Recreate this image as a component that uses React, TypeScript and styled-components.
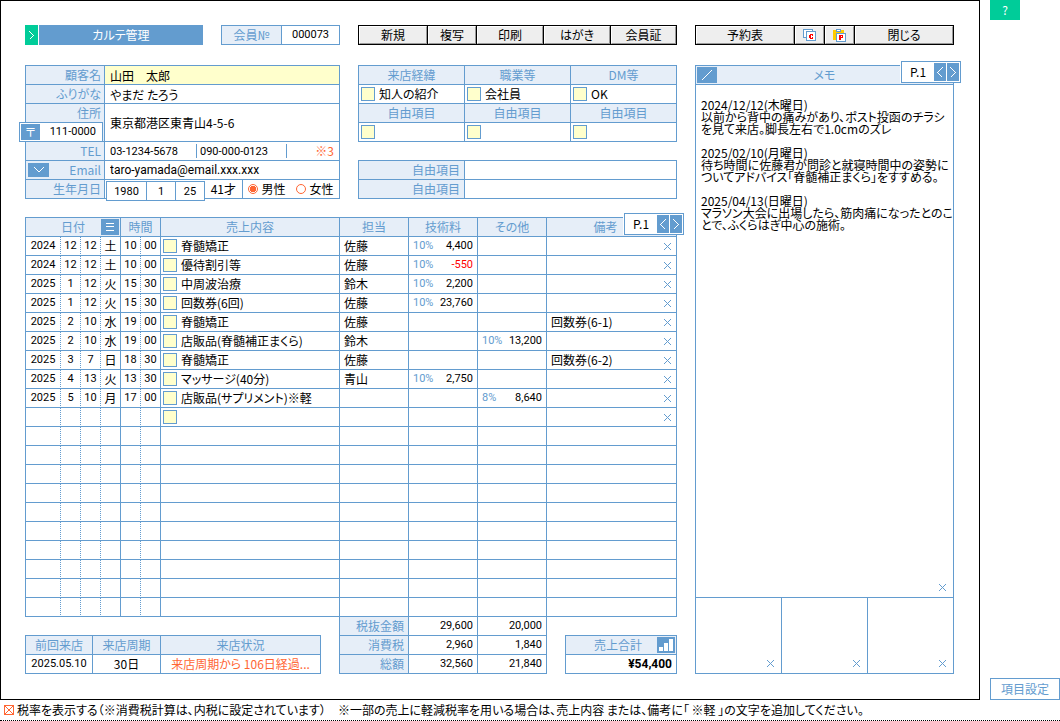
import React from 'react';
import styled, { createGlobalStyle, css } from 'styled-components';

const BLUE = '#639ccf';
const PALE = '#e6eef8';
const YELLOW = '#ffffcc';
const ORANGE = '#ff6633';
const GREEN = '#00cc99';
const JP = '"Noto Sans CJK JP", sans-serif';
const NUM = 'Roboto, "Noto Sans CJK JP", sans-serif';

const GlobalStyle = createGlobalStyle`
  *, *::before, *::after { box-sizing: border-box; }
  body {
    margin: 0;
    background: #fff;
    color: #000;
    font-family: ${JP};
    font-size: 12px;
    line-height: 16px;
    font-feature-settings: 'palt';
  }
  button, input, textarea {
    font: inherit;
    color: inherit;
    margin: 0;
    padding: 0;
    border: 0;
    border-radius: 0;
    background: none;
    font-feature-settings: inherit;
  }
  button { cursor: pointer; }
`;

/* ---------- page frame ---------- */

const Page = styled.div`
  min-width: 900px;
`;

const Top = styled.div`
  display: grid;
  grid-template-columns: minmax(0, 1fr) 70px;
  column-gap: 10px;
`;

const Frame = styled.main`
  border: 1px solid #000;
  padding: 24px 25px 25px 24px;
  display: grid;
  grid-template-columns: minmax(0, 652fr) minmax(0, 259fr);
  gap: 18px;
`;

const Side = styled.aside`
  display: flex;
  flex-direction: column;
  justify-content: space-between;
  align-items: flex-start;
`;

const HelpButton = styled.button`
  width: 30px;
  height: 20px;
  background: ${GREEN};
  color: #fff;
`;

const SettingsButton = styled.button`
  width: 100%;
  height: 22px;
  border: 1px solid ${BLUE};
  background: #fff;
  color: ${BLUE};
`;

const Footer = styled.footer`
  display: flex;
  align-items: center;
  gap: 12px;
  height: 21px;
  padding-left: 4px;
  border-bottom: 1px dotted #000;
  white-space: nowrap;
`;

const FooterLabel = styled.label`
  display: flex;
  align-items: center;
  gap: 3px;
`;

const Pane = styled.div`
  display: flex;
  flex-direction: column;
  min-width: 0;
`;

const Columns = styled.div<{ $space: number }>`
  display: grid;
  grid-template-columns: minmax(0, 315fr) minmax(0, 319fr);
  column-gap: 18px;
  margin-bottom: ${(p) => p.$space}px;
`;

/* ---------- header ---------- */

const TitleRow = styled.div`
  display: flex;
  height: 20px;
`;

const ExpandButton = styled.button`
  width: 13px;
  margin-right: 1px;
  background: ${GREEN};
  color: #fff;
  display: grid;
  place-items: center;
`;

const Title = styled.h1`
  flex: 1;
  margin: 0 18px 0 0;
  background: ${BLUE};
  color: #fff;
  font-size: 12px;
  font-weight: 400;
  line-height: 20px;
  text-align: center;
`;

const MemberNo = styled.div`
  width: 119px;
  display: grid;
  grid-template-columns: 60px 1fr;
  border: 1px solid ${BLUE};
  line-height: 18px;
  text-align: center;
`;

const MemberLabel = styled.label`
  background: ${PALE};
  color: ${BLUE};
  border-right: 1px solid ${BLUE};
`;

const Field = styled.input<{ $align?: string; $num?: boolean }>`
  width: 100%;
  min-width: 0;
  height: 18px;
  text-align: ${(p) => p.$align ?? 'left'};
  font-family: ${(p) => (p.$num ? NUM : JP)};
  font-size: ${(p) => (p.$num ? 11 : 12)}px;
  outline: none;
`;

const EmailField = styled(Field)`
  font-family: ${NUM};
`;

const Toolbar = styled.div<{ $cols: string }>`
  display: grid;
  grid-template-columns: ${(p) => p.$cols};
  gap: 1px;
  height: 20px;
  padding: 1px;
  background: #000;
`;

const ToolButton = styled.button`
  display: grid;
  place-items: center;
  background: #eee;
  border: 1px solid;
  border-color: #fff #999 #999 #fff;
  line-height: 16px;
`;

/* ---------- customer card ---------- */

const Card = styled.form`
  border: 1px solid ${BLUE};
  border-bottom: 0;
  height: 134px;
`;

const Row = styled.div<{ $tall?: boolean }>`
  display: grid;
  grid-template-columns: 79px minmax(0, 1fr);
  height: ${(p) => (p.$tall ? 38 : 19)}px;
  border-bottom: 1px solid ${BLUE};
`;

const RowLabel = styled.div`
  position: relative;
  display: flex;
  align-items: flex-start;
  padding: 0 3px 0 1px;
  background: ${PALE};
  color: ${BLUE};
  border-right: 1px solid ${BLUE};
  line-height: 18px;

  label { margin-left: auto; }
`;

const Value = styled.div<{ $filled?: boolean }>`
  position: relative;
  display: flex;
  align-items: center;
  padding-left: 5px;
  background: ${(p) => (p.$filled ? YELLOW : '#fff')};
`;

const Postal = styled.div`
  position: absolute;
  z-index: 1;
  left: -7px;
  top: 18px;
  width: 84px;
  height: 20px;
  display: flex;
  align-items: center;
  padding: 0 6px 0 1px;
  border: 1px solid ${BLUE};
  background: #fff;
  color: #000;
`;

const BlueButton = styled.button<{ $w: number; $h: number }>`
  flex: none;
  width: ${(p) => p.$w}px;
  height: ${(p) => p.$h}px;
  display: grid;
  place-items: center;
  background: ${BLUE};
  color: #fff;
  line-height: 16px;
`;

const PhonePart = styled.div`
  width: 87px;
  flex: none;
  height: 14px;
  display: flex;
  align-items: center;
  border-right: 1px solid ${BLUE};
  margin-right: 3px;
`;

const Note = styled.span`
  margin-left: auto;
  padding-right: 5px;
  color: ${ORANGE};
`;

const BirthDate = styled.div`
  position: absolute;
  z-index: 1;
  left: 1px;
  top: 1px;
  width: 99px;
  height: 20px;
  display: grid;
  grid-template-columns: 39px 28px 28px;
  gap: 1px;
  border: 1px solid ${BLUE};
  background: ${BLUE};

  input { background: #fff; }
`;

const Age = styled.span`
  width: 133px;
  flex: none;
  height: 18px;
  padding-right: 6px;
  border-right: 1px solid ${BLUE};
  text-align: right;
  line-height: 18px;
`;

const Gender = styled.div`
  flex: 1;
  display: flex;
  justify-content: space-around;
`;

const RadioLabel = styled.label`
  display: flex;
  align-items: center;
  gap: 3px;
`;

const Radio = styled.input`
  appearance: none;
  width: 10px;
  height: 10px;
  border: 1px solid ${ORANGE};
  border-radius: 50%;

  &:checked { background: radial-gradient(${ORANGE} 0 3px, #fff 3px); }
`;

/* ---------- tables ---------- */

const Table = styled.table`
  width: 100%;
  table-layout: fixed;
  border-collapse: separate;
  border-spacing: 0;
  border-top: 1px solid ${BLUE};
  border-left: 1px solid ${BLUE};
`;

const cell = css`
  height: 19px;
  padding: 0;
  border-right: 1px solid ${BLUE};
  border-bottom: 1px solid ${BLUE};
  line-height: 18px;
  white-space: nowrap;
`;

const Th = styled.th<{ $align?: string }>`
  ${cell}
  background: ${PALE};
  color: ${BLUE};
  font-weight: 400;
  text-align: ${(p) => p.$align ?? 'center'};
  padding: ${(p) => (p.$align === 'right' ? '0 4px' : '0')};
`;

const Td = styled.td<{
  $align?: string;
  $dotted?: boolean;
  $num?: boolean;
  $color?: string;
  $bold?: boolean;
  $pick?: boolean;
}>`
  ${cell}
  text-align: ${(p) => p.$align ?? 'left'};
  border-right-style: ${(p) => (p.$dotted ? 'dotted' : 'solid')};
  padding: ${(p) => (p.$align === 'center' ? '0' : p.$pick ? '0 2px' : '0 4px')};
  font-family: ${(p) => (p.$num ? NUM : JP)};
  font-size: ${(p) => (p.$num && !p.$bold ? 11 : 12)}px;
  font-weight: ${(p) => (p.$bold ? 700 : 400)};
  color: ${(p) => p.$color ?? '#000'};
`;

const HeadWithButton = styled.div<{ $cols: string }>`
  display: grid;
  grid-template-columns: ${(p) => p.$cols};
  align-items: center;
  height: 18px;
  padding: 0 1px;
  text-align: center;
`;

const Amount = styled.div<{ $negative?: boolean }>`
  display: flex;
  justify-content: space-between;
  color: ${(p) => (p.$negative ? '#f00' : '#000')};
`;

const Rate = styled.span`
  color: ${BLUE};
`;

const RemarkCell = styled.div`
  display: flex;
  justify-content: space-between;
  align-items: center;
`;

const Picker = styled.input`
  appearance: none;
  flex: none;
  width: 14px;
  height: 14px;
  border: 1px solid ${BLUE};
  background: ${YELLOW};
`;

const PickLabel = styled.label`
  display: flex;
  align-items: center;
  gap: 4px;
  height: 18px;
`;

const TickBox = styled.input`
  appearance: none;
  width: 10px;
  height: 10px;
  border: 1px solid ${ORANGE};

  &:checked {
    background:
      linear-gradient(45deg, transparent 44%, ${ORANGE} 44% 56%, transparent 56%),
      linear-gradient(-45deg, transparent 44%, ${ORANGE} 44% 56%, transparent 56%);
  }
`;

const ClearButton = styled.button`
  width: 9px;
  height: 9px;
  display: grid;
  place-items: center;
  color: ${BLUE};
`;

const FreeSpace = styled.div`
  margin-top: 18px;
`;

const Relative = styled.div`
  position: relative;
`;

const PagerBox = styled.div`
  position: absolute;
  z-index: 1;
  top: -4px;
  right: -7px;
  width: 60px;
  height: 22px;
  display: flex;
  gap: 1px;
  padding: 1px;
  border: 1px solid ${BLUE};
  background: #fff;
  box-shadow: -1px 0 0 #fff;
`;

const PageNo = styled.span`
  flex: 1;
  text-align: center;
  line-height: 18px;
`;

const Summary = styled.div`
  display: flex;
  align-items: flex-end;
  gap: 18px;
`;

const Visit = styled.div`
  flex: 1;
  min-width: 0;
`;

const Totals = styled.div`
  width: 208px;

  table { border-top: 0; }
`;

const Grand = styled.div`
  width: 112px;
`;

/* ---------- memo ---------- */

const MemoPanel = styled.section`
  position: relative;
  flex: 1;
  display: flex;
  flex-direction: column;
  margin-top: 20px;
`;

const MemoBody = styled.div`
  flex: 1;
  display: flex;
  flex-direction: column;
  border: 1px solid ${BLUE};
`;

const MemoHead = styled.div`
  background: ${PALE};
  color: ${BLUE};
  border-bottom: 1px solid ${BLUE};
`;

const MemoText = styled.textarea`
  flex: 1;
  width: 100%;
  padding: 14px 0 0 5px;
  line-height: 12px;
  resize: none;
  outline: none;
  overflow: hidden;
  white-space: pre;
`;

const MemoClear = styled.div`
  display: flex;
  justify-content: flex-end;
  padding: 0 6px 5px;
`;

const Photos = styled.div`
  display: grid;
  grid-template-columns: repeat(3, minmax(0, 1fr));
  gap: 1px;
  height: 76px;
  border-top: 1px solid ${BLUE};
  background: ${BLUE};
`;

const Photo = styled.div`
  display: flex;
  align-items: flex-end;
  justify-content: flex-end;
  padding: 0 6px 5px;
  background: #fff;
`;

/* ---------- drawings ---------- */

const Line = ({ d, w, h }: { d: string; w: number; h: number }) => (
  <svg width={w} height={h} viewBox={`0 0 ${w} ${h}`} fill="none" stroke="currentColor" shapeRendering="crispEdges" aria-hidden="true">
    <path d={d} />
  </svg>
);

const Clear = ({ label }: { label: string }) => (
  <ClearButton type="button" aria-label={label}>
    <Line w={7} h={7} d="M0 0L7 7M7 0L0 7" />
  </ClearButton>
);

const CopyIcon = () => (
  <svg width="13" height="12" viewBox="0 0 13 12" fill="none" shapeRendering="crispEdges" aria-hidden="true">
    <path d="M.5 .5H9.5V8.5H.5Z" fill="#fff" stroke={BLUE} />
    <path d="M3.500 2.500H12.500V11.500H3.500Z" fill="#fff" stroke={BLUE} />
    <path d="M7 5h3v1H7zM6 6h2v3H6zM7 9h3v1H7zM9 6h1v1H9zM9 8h1v1H9z" fill="#f00" />
  </svg>
);

const PasteIcon = () => (
  <svg width="13" height="13" viewBox="0 0 13 13" fill="none" shapeRendering="crispEdges" aria-hidden="true">
    <path d="M0 1H11V11H0Z" fill="#fc0" />
    <path d="M3.500 .5H7.500V2.500H3.500Z" fill="#fff" stroke={BLUE} />
    <path d="M3.500 4.500H12.500V12.500H3.500Z" fill="#fff" stroke={BLUE} />
    <path d="M6 6h2v5H6zM8 6h2v1H8zM9 7h1v1H9zM8 8h2v1H8z" fill="#f00" />
  </svg>
);

const ChartIcon = () => (
  <svg width="16" height="14" viewBox="0 0 16 14" fill="#fff" shapeRendering="crispEdges" aria-hidden="true">
    <path d="M1 9h4v4H1zM6 5h4v8H6zM11 1h4v12h-4z" />
  </svg>
);

const Pager = () => (
  <PagerBox>
    <PageNo>P.1</PageNo>
    <BlueButton type="button" $w={12} $h={18} aria-label="前のページ">
      <Line w={6} h={11} d="M5.500 .5L.5 5.500L5.500 10.500" />
    </BlueButton>
    <BlueButton type="button" $w={12} $h={18} aria-label="次のページ">
      <Line w={6} h={11} d="M.5 .5L5.500 5.500L.5 10.500" />
    </BlueButton>
  </PagerBox>
);

/* ---------- data ---------- */

type Sale = {
  date: [string, string, string, string];
  time: [string, string];
  item: string;
  staff: string;
  tech?: [string, string];
  other?: [string, string];
  remark?: string;
};

const sales: Sale[] = [
  { date: ['2024', '12', '12', '土'], time: ['10', '00'], item: '脊髄矯正', staff: '佐藤', tech: ['10%', '4,400'] },
  { date: ['2024', '12', '12', '土'], time: ['10', '00'], item: '優待割引等', staff: '佐藤', tech: ['10%', '-550'] },
  { date: ['2025', '1', '12', '火'], time: ['15', '30'], item: '中周波治療', staff: '鈴木', tech: ['10%', '2,200'] },
  { date: ['2025', '1', '12', '火'], time: ['15', '30'], item: '回数券(6回)', staff: '佐藤', tech: ['10%', '23,760'] },
  { date: ['2025', '2', '10', '水'], time: ['19', '00'], item: '脊髄矯正', staff: '佐藤', remark: '回数券(6-1)' },
  { date: ['2025', '2', '10', '水'], time: ['19', '00'], item: '店販品(脊髄補正まくら)', staff: '鈴木', other: ['10%', '13,200'] },
  { date: ['2025', '3', '7', '日'], time: ['18', '30'], item: '脊髄矯正', staff: '佐藤', remark: '回数券(6-2)' },
  { date: ['2025', '4', '13', '火'], time: ['13', '30'], item: 'マッサージ(40分)', staff: '青山', tech: ['10%', '2,750'] },
  { date: ['2025', '5', '10', '月'], time: ['17', '00'], item: '店販品(サプリメント)※軽', staff: '', other: ['8%', '8,640'] },
  { date: ['', '', '', ''], time: ['', ''], item: '', staff: '' },
];

const blankRows = Array.from({ length: 10 }, (_, i) => i);

const memo = `2024/12/12(木曜日)
以前から背中の痛みがあり、ポスト投函のチラシ
を見て来店。脚長左右で1.0cmのズレ

2025/02/10(月曜日)
待ち時間に佐藤君が問診と就寝時間中の姿勢に
ついてアドバイス「脊髄補正まくら」をすすめる。

2025/04/13(日曜日)
マラソン大会に出場したら、筋肉痛になったとのこ
とで、ふくらはぎ中心の施術。`;

const Money = ({ value }: { value?: [string, string] }) => (
  <Td $num>
    {value && (
      <Amount $negative={value[1].startsWith('-')}>
        <Rate>{value[0]}</Rate>
        <span>{value[1]}</span>
      </Amount>
    )}
  </Td>
);

const Pick = ({ text, label }: { text: string; label: string }) => (
  <Td $pick>
    <PickLabel>
      <Picker type="checkbox" aria-label={label} />
      {text}
    </PickLabel>
  </Td>
);

const SalesTable = () => (
  <Relative>
    <Table>
      <colgroup>
        {[35, 20, 20, 20, 20, 20].map((w, i) => (
          <col key={i} width={w} />
        ))}
        <col />
        {[69, 69, 69, 130].map((w, i) => (
          <col key={i} width={w} />
        ))}
      </colgroup>
      <thead>
        <tr>
          <Th colSpan={4}>
            <HeadWithButton $cols="18px 1fr 18px">
              <i />
              <span>日付</span>
              <BlueButton type="button" $w={18} $h={16} aria-label="並べ替え">
                <Line w={8} h={8} d="M0 .5H8M0 3.500H8M0 7.500H8" />
              </BlueButton>
            </HeadWithButton>
          </Th>
          <Th colSpan={2}>時間</Th>
          <Th>売上内容</Th>
          <Th>担当</Th>
          <Th>技術料</Th>
          <Th>その他</Th>
          <Th>
            <HeadWithButton $cols="1fr 12px"><span>備考</span></HeadWithButton>
          </Th>
        </tr>
      </thead>
      <tbody>
        {sales.map((s, i) => (
          <tr key={i}>
            <Td $align="center" $dotted $num>{s.date[0]}</Td>
            <Td $align="center" $dotted $num>{s.date[1]}</Td>
            <Td $align="center" $dotted $num>{s.date[2]}</Td>
            <Td $align="center">{s.date[3]}</Td>
            <Td $align="center" $dotted $num>{s.time[0]}</Td>
            <Td $align="center" $num>{s.time[1]}</Td>
            <Pick text={s.item} label="売上内容を選択" />
            <Td>{s.staff}</Td>
            <Money value={s.tech} />
            <Money value={s.other} />
            <Td>
              <RemarkCell>
                <span>{s.remark}</span>
                <Clear label="行を削除" />
              </RemarkCell>
            </Td>
          </tr>
        ))}
        {blankRows.map((i) => (
          <tr key={i}>
            {[true, true, true, false, true, false, false, false, false, false, false].map((dotted, c) => (
              <Td key={c} $dotted={dotted} />
            ))}
          </tr>
        ))}
      </tbody>
    </Table>
    <Pager />
  </Relative>
);

const CustomerCard = () => (
  <Card>
    <Row>
      <RowLabel><label htmlFor="name">顧客名</label></RowLabel>
      <Value $filled><Field id="name" defaultValue="山田　太郎" /></Value>
    </Row>
    <Row>
      <RowLabel><label htmlFor="kana">ふりがな</label></RowLabel>
      <Value><Field id="kana" defaultValue="やまだ たろう" /></Value>
    </Row>
    <Row $tall>
      <RowLabel>
        <label htmlFor="address">住所</label>
        <Postal>
          <BlueButton type="button" $w={19} $h={16}>〒</BlueButton>
          <Field $num $align="right" aria-label="郵便番号" defaultValue="111-0000" />
        </Postal>
      </RowLabel>
      <Value><Field id="address" defaultValue="東京都港区東青山4-5-6" /></Value>
    </Row>
    <Row>
      <RowLabel><label htmlFor="tel">TEL</label></RowLabel>
      <Value>
        <PhonePart><Field $num id="tel" defaultValue="03-1234-5678" /></PhonePart>
        <PhonePart><Field $num aria-label="携帯電話" defaultValue="090-000-0123" /></PhonePart>
        <Note>※3</Note>
      </Value>
    </Row>
    <Row>
      <RowLabel>
        <HeadWithButton $cols="21px">
          <BlueButton type="button" $w={21} $h={14} aria-label="メールの一覧">
            <Line w={10} h={6} d="M.5 .5L5 5L9.500 .5" />
          </BlueButton>
        </HeadWithButton>
        <label htmlFor="email">Email</label>
      </RowLabel>
      <Value><EmailField id="email" defaultValue="taro-yamada@email.xxx.xxx" /></Value>
    </Row>
    <Row>
      <RowLabel><label htmlFor="year">生年月日</label></RowLabel>
      <Value>
        <BirthDate>
          <Field $num $align="center" id="year" defaultValue="1980" />
          <Field $num $align="center" aria-label="月" defaultValue="1" />
          <Field $num $align="center" aria-label="日" defaultValue="25" />
        </BirthDate>
        <Age>41才</Age>
        <Gender>
          <RadioLabel><Radio type="radio" name="gender" defaultChecked />男性</RadioLabel>
          <RadioLabel><Radio type="radio" name="gender" />女性</RadioLabel>
        </Gender>
      </Value>
    </Row>
  </Card>
);

const Attributes = () => (
  <div>
    <Table>
      <tbody>
        <tr><Th>来店経緯</Th><Th>職業等</Th><Th>DM等</Th></tr>
        <tr>
          <Pick text="知人の紹介" label="来店経緯" />
          <Pick text="会社員" label="職業等" />
          <Pick text="OK" label="DM等" />
        </tr>
        <tr><Th>自由項目</Th><Th>自由項目</Th><Th>自由項目</Th></tr>
        <tr>
          <Pick text="" label="自由項目1" />
          <Pick text="" label="自由項目2" />
          <Pick text="" label="自由項目3" />
        </tr>
      </tbody>
    </Table>
    <FreeSpace>
      <Table>
        <colgroup><col width={106} /><col /></colgroup>
        <tbody>
          <tr><Th $align="right" scope="row">自由項目</Th><Td /></tr>
          <tr><Th $align="right" scope="row">自由項目</Th><Td /></tr>
        </tbody>
      </Table>
    </FreeSpace>
  </div>
);

const SummaryRow = () => (
  <Summary>
    <Visit>
      <Table>
        <colgroup><col width={67} /><col width={68} /><col /></colgroup>
        <thead><tr><Th>前回来店</Th><Th>来店周期</Th><Th>来店状況</Th></tr></thead>
        <tbody>
          <tr>
            <Td $align="center" $num>2025.05.10</Td>
            <Td $align="center">30日</Td>
            <Td $align="center" $color={ORANGE}>来店周期から 106日経過...</Td>
          </tr>
        </tbody>
      </Table>
    </Visit>
    <Totals>
      <Table>
        <tbody>
          {[['税抜金額', '29,600', '20,000'], ['消費税', '2,960', '1,840'], ['総額', '32,560', '21,840']].map((r) => (
            <tr key={r[0]}>
              <Th $align="right" scope="row">{r[0]}</Th>
              <Td $align="right" $num>{r[1]}</Td>
              <Td $align="right" $num>{r[2]}</Td>
            </tr>
          ))}
        </tbody>
      </Table>
    </Totals>
    <Grand>
      <Table>
        <thead>
          <tr>
            <Th>
              <HeadWithButton $cols="12px 1fr 18px">
                <i />
                <span>売上合計</span>
                <BlueButton type="button" $w={18} $h={16} aria-label="売上グラフ"><ChartIcon /></BlueButton>
              </HeadWithButton>
            </Th>
          </tr>
        </thead>
        <tbody><tr><Td $align="right" $num $bold>¥54,400</Td></tr></tbody>
      </Table>
    </Grand>
  </Summary>
);

export default function App() {
  return (
    <Page>
      <GlobalStyle />
      <Top>
        <Frame>
          <Pane>
            <Columns $space={20}>
              <TitleRow>
                <ExpandButton type="button" aria-label="開く">
                  <Line w={5} h={9} d="M.5 .5L4.500 4.500L.5 8.500" />
                </ExpandButton>
                <Title>カルテ管理</Title>
                <MemberNo>
                  <MemberLabel htmlFor="member">会員№</MemberLabel>
                  <Field $num $align="center" id="member" defaultValue="000073" />
                </MemberNo>
              </TitleRow>
              <Toolbar $cols="68fr 48fr 66fr 66fr 65fr">
                {['新規', '複写', '印刷', 'はがき', '会員証'].map((t) => (
                  <ToolButton key={t} type="button">{t}</ToolButton>
                ))}
              </Toolbar>
            </Columns>
            <Columns $space={18}>
              <CustomerCard />
              <Attributes />
            </Columns>
            <SalesTable />
            <SummaryRow />
          </Pane>
          <Pane>
            <Toolbar $cols="1fr 29px 29px 1fr">
              <ToolButton type="button">予約表</ToolButton>
              <ToolButton type="button" aria-label="コピー"><CopyIcon /></ToolButton>
              <ToolButton type="button" aria-label="貼り付け"><PasteIcon /></ToolButton>
              <ToolButton type="button">閉じる</ToolButton>
            </Toolbar>
            <MemoPanel>
              <MemoBody>
                <MemoHead>
                  <HeadWithButton $cols="20px 1fr 20px">
                    <BlueButton type="button" $w={20} $h={16} aria-label="メモを編集">
                      <Line w={10} h={10} d="M0 10L10 0" />
                    </BlueButton>
                    <label htmlFor="memo">メモ</label>
                  </HeadWithButton>
                </MemoHead>
                <MemoText id="memo" defaultValue={memo} />
                <MemoClear><Clear label="メモを消去" /></MemoClear>
                <Photos>
                  {[1, 2, 3].map((n) => (
                    <Photo key={n}><Clear label={`画像${n}を消去`} /></Photo>
                  ))}
                </Photos>
              </MemoBody>
              <Pager />
            </MemoPanel>
          </Pane>
        </Frame>
        <Side>
          <HelpButton type="button">?</HelpButton>
          <SettingsButton type="button">項目設定</SettingsButton>
        </Side>
      </Top>
      <Footer>
        <FooterLabel>
          <TickBox type="checkbox" defaultChecked />
          税率を表示する（※消費税計算は、内税に設定されています）
        </FooterLabel>
        <span>※一部の売上に軽減税率を用いる場合は、売上内容 または、備考に「 ※軽 」の文字を追加してください。</span>
      </Footer>
    </Page>
  );
}
